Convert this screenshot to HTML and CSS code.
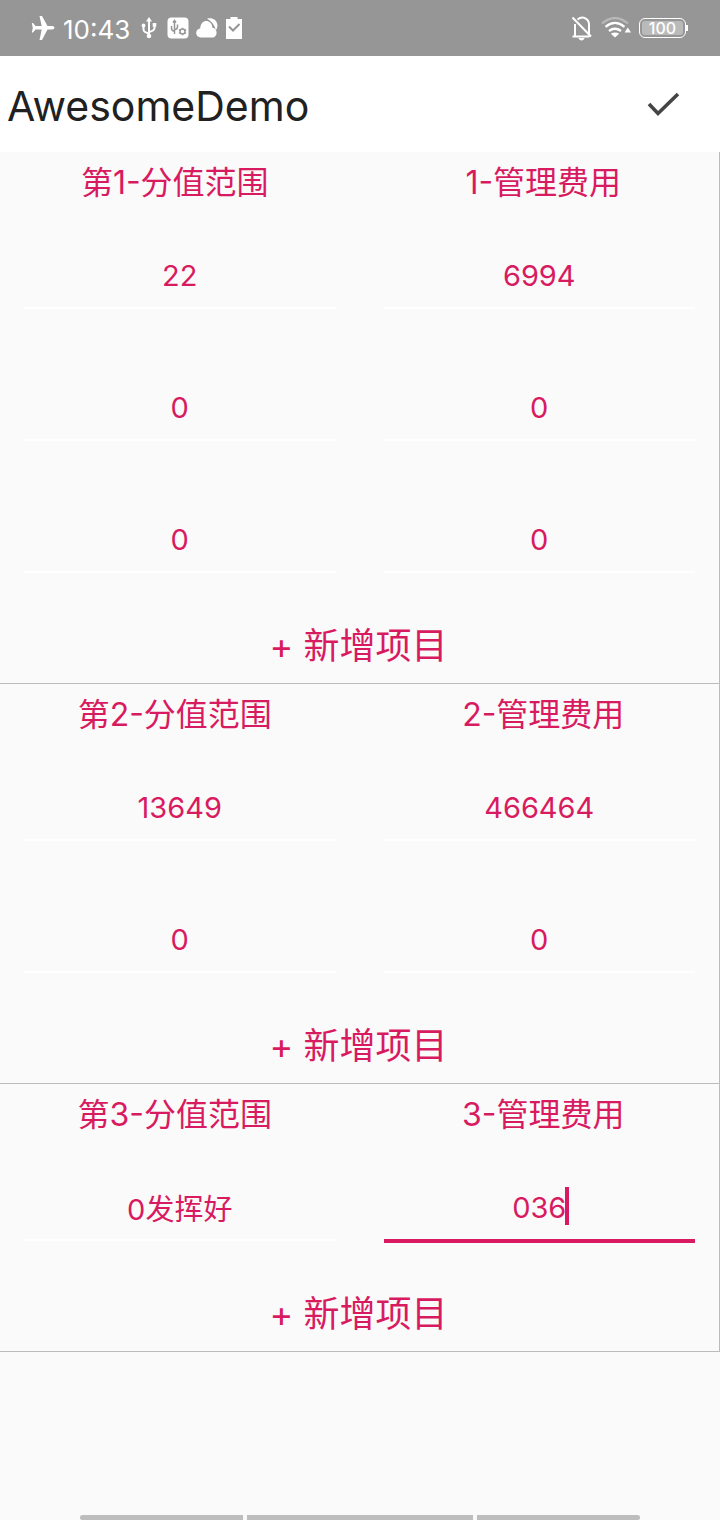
FILE: index.html
```html
<!DOCTYPE html>
<html lang="zh-CN">
<head>
<meta charset="utf-8">
<meta name="viewport" content="width=device-width, initial-scale=1">
<title>AwesomeDemo</title>
<link rel="stylesheet" href="styles.css">
</head>
<body>
<div class="status">
  <div class="status-left">
    <svg class="plane" width="24" height="26" viewBox="0 0 24 26"><path d="M8.500 1h2.500l5.500 10H21q2.500 0 2.500 1.800T21 14.600h-4.500L11 25H8.500l2.200-10.400H4.500L2 17.500H.8L1.800 13 .8 8H2l2.500 3h6.200z"/></svg>
    <span class="clock">10:43</span>
    <svg class="usb" width="16" height="22" viewBox="0 0 16 22"><path class="line" d="M8 3v16M8 16.500c-4-1-5.500-2-5.500-4V9M8 15c4-1 5.500-2 5.500-4V8"/><path d="M8 0l3 4.500H5z"/><circle cx="8" cy="19" r="2.300"/><circle cx="2.500" cy="8.500" r="1.900"/><path d="M11.700 6h3.600v3.600h-3.600z"/></svg>
    <svg class="usb-set" width="22" height="22" viewBox="0 0 22 22"><rect x="0.500" y="0.500" width="21" height="21" rx="4"/><path class="cut" d="M7.500 4v13M7.500 14.500c-2.500-.8-3-1.500-3-3V9M7.500 13c2.500-.8 3-1.500 3-3V7.500M6 5.500l1.500-2L9 5.500"/><circle class="cut" cx="15.500" cy="14.500" r="2.500"/><path class="cut" d="M15.500 10.800v1M15.500 17.200v1M12 12.700l1 .6M18 15.800l1 .6M19 12.700l-1 .6M13 15.800l-1 .6"/></svg>
    <svg class="cloud" width="22" height="20" viewBox="0 0 22 20"><path d="M11 .8c5-1.500 9.500 1 10.300 5.500.3 2.500-.3 4.500-1.500 6C18.500 7 16 3.500 11 .8z"/><path d="M5 19.500c-6.500 0-6-8.500-.8-9C4.500 1 15.500.500 16.500 9.800c5.500.4 5.500 9.700-.5 9.700z"/></svg>
    <svg class="clip" width="16" height="22" viewBox="0 0 16 22"><path d="M0 2h4.500V0h7v2H16v20H0z"/><path class="cut2" d="M3 9.500l4 4 6.500-6.500"/></svg>
  </div>
  <div class="status-right">
    <svg class="bell" width="22" height="25" viewBox="0 0 22 25"><path class="line2" d="M6.500 3.500C12-.8 18 3 18 8.500v9.500M4 8v11.500M1.500 20.500h17M1.500 1.500l18.500 19"/><path d="M7.500 22h6c-.5 3.200-5.500 3.200-6 0z"/></svg>
    <svg class="wifi" width="30" height="22" viewBox="0 0 30 22"><path class="arc faint" d="M1 6.500Q14-4.500 27 6.500"/><path class="arc" d="M4.500 9.800Q14 2 23.500 9.800M8 14Q14 9.500 20 14"/><path d="M9.800 16.800q4.200-2.600 8.400 0L14 20.500zM26.800 10.500l3.200 5h-6.400z"/></svg>
    <div class="battery"><span class="charge">100</span></div>
  </div>
</div>
<header class="appbar">
  <h1 class="title">AwesomeDemo</h1>
  <button class="done" type="button" aria-label="完成"><svg width="34" height="26" viewBox="0 0 34 26"><path d="M3 13l9 9.500L32 3"/></svg></button>
</header>
<main class="form">
  <section class="group">
    <div class="grid">
      <h2 class="head range" id="r1">第1-分值范围</h2><h2 class="head fee" id="f1">1-管理费用</h2>
      <div class="cell"><input class="field" type="text" value="22" aria-labelledby="r1"></div>
      <div class="cell"><input class="field" type="text" value="6994" aria-labelledby="f1"></div>
      <div class="cell"><input class="field" type="text" value="0" aria-labelledby="r1"></div>
      <div class="cell"><input class="field" type="text" value="0" aria-labelledby="f1"></div>
      <div class="cell"><input class="field" type="text" value="0" aria-labelledby="r1"></div>
      <div class="cell"><input class="field" type="text" value="0" aria-labelledby="f1"></div>
    </div>
    <button class="add" type="button">+ 新增项目</button>
  </section>
  <section class="group">
    <div class="grid">
      <h2 class="head range" id="r2">第2-分值范围</h2><h2 class="head fee" id="f2">2-管理费用</h2>
      <div class="cell"><input class="field" type="text" value="13649" aria-labelledby="r2"></div>
      <div class="cell"><input class="field" type="text" value="466464" aria-labelledby="f2"></div>
      <div class="cell"><input class="field" type="text" value="0" aria-labelledby="r2"></div>
      <div class="cell"><input class="field" type="text" value="0" aria-labelledby="f2"></div>
    </div>
    <button class="add" type="button">+ 新增项目</button>
  </section>
  <section class="group">
    <div class="grid">
      <h2 class="head range" id="r3">第3-分值范围</h2><h2 class="head fee" id="f3">3-管理费用</h2>
      <div class="cell"><input class="field" type="text" value="0发挥好" aria-labelledby="r3"></div>
      <div class="cell active"><input class="field" type="text" value="036" aria-labelledby="f3"><span class="caret"></span></div>
    </div>
    <button class="add" type="button">+ 新增项目</button>
  </section>
</main>
<div class="gestures"><span class="side"></span><span class="home"></span><span class="side"></span></div>
</body>
</html>
```
FILE: styles.css
```css
* { box-sizing: border-box; }
body {
  margin: 0;
  min-height: 100vh;
  display: flex;
  flex-direction: column;
  background: #fafafa;
  color: #d81b60;
  font-family: Inter, "Noto Sans CJK SC", sans-serif;
  font-weight: 400;
}
button { border: 0; background: none; padding: 0; color: inherit; font: inherit; }
svg { display: block; fill: #fff; flex: none; }

.status {
  height: 56px;
  padding: 0 34px 0 31px;
  display: flex;
  justify-content: space-between;
  align-items: center;
  background: #969696;
  color: #fff;
}
.status-left, .status-right { display: flex; align-items: center; }
.clock { margin: 0 11px 0 8px; padding-top: 3px; font-size: 26px; line-height: 32px; }
.usb { margin-right: 10px; }
.usb-set { margin-right: 7px; }
.cloud { margin-right: 8px; }
.line { fill: none; stroke: #fff; stroke-width: 2; }
.line2 { fill: none; stroke: #fff; stroke-width: 2; }
.cut { fill: none; stroke: #969696; stroke-width: 1.5; }
.cut2 { fill: none; stroke: #969696; stroke-width: 2; }
.bell { margin-right: 8px; }
.wifi { margin-right: 8px; }
.arc { fill: none; stroke: #fff; stroke-width: 2.2; }
.faint { stroke: #b8b8b8; }
.battery {
  position: relative;
  width: 47px;
  height: 20px;
  padding: 2px;
  border: 1px solid #fff;
  border-radius: 6px;
}
.battery::after {
  content: "";
  position: absolute;
  right: -3px;
  top: 6px;
  width: 2px;
  height: 6px;
  background: #fff;
}
.charge {
  display: block;
  border-radius: 3px;
  background: #bababa;
  font-size: 16px;
  line-height: 14px;
  font-weight: 500;
  text-align: center;
}

.appbar {
  height: 96px;
  padding: 0 40px 0 7px;
  display: flex;
  align-items: center;
  justify-content: space-between;
  background: #fff;
}
.title { margin: 0; padding-top: 4px; font-size: 41px; line-height: 48px; font-weight: 400; color: #212121; }
.done svg { fill: none; stroke: #454545; stroke-width: 3.6; }

.group { border-right: 1px solid #bbb; border-bottom: 1px solid #bbb; }
.grid { display: grid; grid-template-columns: 1fr 1fr; }
.head { margin: 0; height: 60px; padding-top: 1px; font-size: 32px; line-height: 60px; font-weight: 400; text-align: center; }
.range { padding-right: 10px; }
.fee { padding-left: 8px; }
.cell { position: relative; height: 132px; padding: 31px 24px 0; }
.field {
  display: block;
  width: 100%;
  height: 66px;
  padding: 0;
  border: 0;
  border-bottom: 2px solid #fff;
  border-radius: 0;
  outline: 0;
  background: transparent;
  color: inherit;
  font: inherit;
  font-size: 29px;
  text-align: center;
}
.active .field { height: 68px; border-bottom: 4px solid #d81b60; }
.caret { position: absolute; left: calc(50% + 26px); top: 43px; width: 4px; height: 38px; background: #d81b60; }
.add { display: block; width: 100%; height: 75px; padding: 2px 2px 0 0; font-size: 36px; line-height: 73px; }

.gestures { margin-top: auto; padding: 0 11.11%; display: flex; gap: 4px; height: 5px; }
.gestures span { background: #bdbdbd; }
.side { flex: 163; }
.home { flex: 226; }
.side:first-child { border-radius: 3px 0 0 3px; }
.side:last-child { border-radius: 0 3px 3px 0; }
```
